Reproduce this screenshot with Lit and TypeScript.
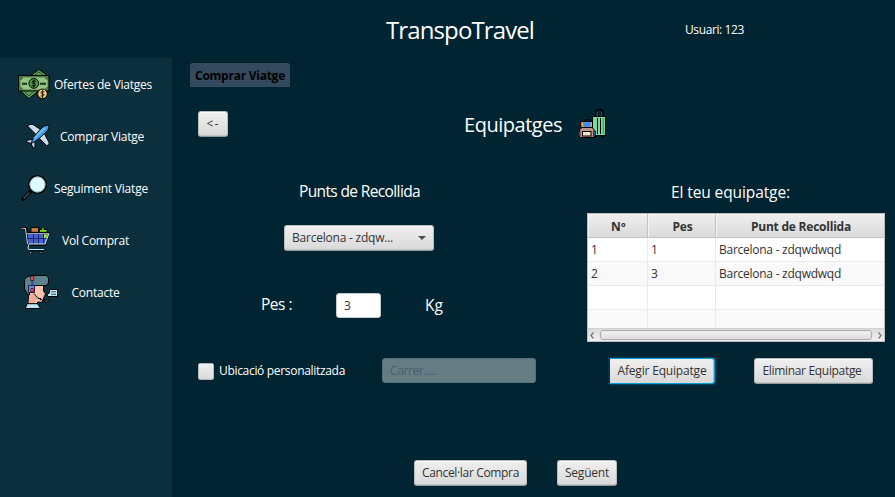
import { LitElement, html, css, svg } from "lit";
import { customElement, property } from "lit/decorators.js";

/** A single line of text whose letter spacing is tuned to fill a given width. */
@customElement("text-run")
class TextRun extends LitElement {
  @property() text = "";
  @property({ type: Number }) width = 0;

  static styles = css`
    :host { display: block; flex: none; white-space: nowrap; }
    .run { display: inline-block; white-space: pre; }
  `;

  firstUpdated() {
    const run = this.renderRoot.querySelector(".run") as HTMLElement;
    const natural = run.getBoundingClientRect().width;
    this.style.width = `${this.width}px`;
    run.style.letterSpacing = `${(this.width - natural) / this.text.length}px`;
  }

  render() {
    return html`<span class="run">${this.text}</span>`;
  }
}

const t = (text: string, width: number) => html`<text-run .text=${text} .width=${width}></text-run>`;

const money = svg`<svg width="34" height="32" viewBox="17 68 34 32" stroke="#000" stroke-width="1">
  <path d="M39 69.5 48 76H30zM20 90.500H39L29 98.500z" fill="#5f9f55"/>
  <path d="M35 75l4-3 4 3M25 92l4 4 4-4" fill="none" stroke="#294f2a"/>
  <rect x="18.500" y="75.500" width="30.500" height="15.500" fill="#4e7a48"/>
  <path d="M23 77.500H45C45 79 46 80 47.500 80V87C46 87 45 88 45 89.500H23C23 88 22 87 20.500 87V80C22 80 23 79 23 77.500z" fill="#94c582" stroke="none"/>
  <path d="M22 83.700h5M40 83.700h6" stroke="#17361c" stroke-width="2"/>
  <circle cx="33.800" cy="83.400" r="4.900" fill="#4e9a4c"/>
  <path d="M36 81.200h-3.200q-1.500 1 0 2.200h2q1.500 1.300 0 2.300h-3.300M33.900 79.500v8" fill="none"/>
  <circle cx="42.500" cy="93.800" r="4.800" fill="#f6cf7c"/>
  <path d="M44.500 91.700h-3q-1.400 1 0 2.100h2q1.400 1.200 0 2.200h-3M42.500 90v8" fill="none" stroke-width=".8"/>
</svg>`;

const plane = svg`<svg width="26" height="26" viewBox="25 123 26 26" stroke="#000" stroke-width="1" stroke-linejoin="round">
  <path d="M28 126.500 29.500 124.500H33L42 130.500 37 135.500zM43 131 49 142.500V145L46.500 145.500 38 137z" fill="#c9dce9"/>
  <path d="M31.500 139.500 27 140.300 26.500 142 31 143.500 33.200 148 35 147 35 142z" fill="#c3dbed"/>
  <path d="M31 143.500C32 139 38 131 44 126L48.800 125C49.500 129 47 131 44.500 133.500 40 138 36 141.500 31 143.500z" fill="#419de9"/>
  <path d="M34 138.500 44.500 128" stroke="#75bcf4" stroke-width="2"/>
</svg>`;

const lens = svg`<svg width="28" height="28" viewBox="21 174 28 28">
  <path d="M30.500 191.500 23 199.500" stroke="#000" stroke-width="3.400" stroke-linecap="round"/>
  <path d="M29.500 192.500 23.500 198.800" stroke="#3c5158" stroke-width="1.500"/>
  <circle cx="37.500" cy="184.500" r="8.700" fill="#dcfbff" stroke="#000" stroke-width="1.600"/>
  <circle cx="37.500" cy="184.500" r="7.600" fill="none" stroke="#8ba2aa" stroke-width=".8"/>
</svg>`;

const cart = svg`<svg width="30" height="30" viewBox="21 225 30 30" stroke="#000">
  <rect x="31" y="227.500" width="7.500" height="5" fill="#d07c43"/>
  <path d="M39.500 232.500V229.500H42V227H44V229.500H47V232.500z" fill="#88d51c" stroke-width=".8"/>
  <path d="M21.500 228.500H26L28.500 245" fill="none" stroke-width="3"/>
  <path d="M27 233H49.500L45.500 244.500H28z" fill="#4b61cd"/>
  <path d="M44 234.500h3.500l-1.200 4H44z" fill="#9adf29" stroke="none"/>
  <path d="M28 238.500h19M33.500 234v10M38.500 234v10M43.500 234v10" stroke="#14266e"/>
  <path d="M22 228.500h3.500L27.500 244M49 233.500l-4 10.500H29L28 248q0 1.500 2 1.500H44" fill="none" stroke="#bceaf4"/>
  <path d="M27 233.500H49" stroke="#9aa9ad"/>
  <path d="M27 232.300H51M29 245.500H46" fill="none" stroke-width=".9"/>
  <path d="M30 250.800H44" stroke-width=".8"/>
  <path d="M21.500 228.500H24" stroke="#ec5791" stroke-width="1.500"/>
  <circle cx="30.500" cy="252.700" r="1.200" fill="#9ab2bb"/><circle cx="41" cy="252.700" r="1.200" fill="#9ab2bb"/>
</svg>`;

const agent = svg`<svg width="36" height="36" viewBox="23 274 36 36" stroke="#000" stroke-linejoin="round">
  <path d="M28.500 292V304H37.500V302H42.500L43.500 298 45.500 294 43.500 291V284H30z" fill="#fac3b1" stroke-width=".9"/>
  <path d="M24.500 279.500 27 277 31 275.500H46.500L48.500 278V283L46 285.500H34.500L29.500 286V295H28L24.500 289z" fill="#5c828a"/>
  <path d="M30 294.500C28.500 297 29 300 28.500 303H34L37 299 35 293z" fill="#f5ab9a" stroke="none"/>
  <path d="M25.500 308 27 303.700H37.500L40.500 308.500H25.500z" fill="#bce6f8"/>
  <rect x="30.700" y="276" width="3" height="4.500" fill="#f44b58" stroke-width=".6"/>
  <path d="M32.300 281v4.500" stroke="#3548aa" stroke-width="2"/>
  <rect x="28.500" y="285.500" width="6" height="7" fill="#7783cb" stroke="#1c2857"/>
  <rect x="30.800" y="288.500" width="2.500" height="3.500" fill="#f44b58" stroke-width=".5"/>
  <path d="M34 293.500 38 298.500H41M42 300.500h3M38.500 297.500l1.500 2h2" fill="none" stroke-width=".9"/>
  <ellipse cx="46.500" cy="301" rx="2.200" ry="1.200" fill="#42565d" stroke-width=".8"/>
  <path d="M49.500 289.500H57.500V296.500H48L47 294.500 49.500 293z" fill="#c3eaf5"/>
  <path d="M51 291.800h5M51 294.300h5" stroke="#26536a"/>
</svg>`;

const bags = svg`<svg width="30" height="32" viewBox="577 108 30 32" stroke="#000">
  <path d="M596 116V111L597.500 109.500H601L602.500 111V116" fill="none" stroke-width="1.600"/>
  <path d="M597 116v-4M601.500 116v-4" stroke="#5b6b70" stroke-width=".7"/>
  <rect x="592.500" y="116.500" width="13" height="19" fill="#79dc9a"/>
  <path d="M597.500 118v16M600.500 118v16" /><path d="M603.300 118v16" stroke="#388b5b"/>
  <rect x="594" y="135.500" width="2" height="1.500" fill="#111"/><rect x="602" y="135.500" width="2" height="1.500" fill="#111"/>
  <path d="M585 122V119.500H589V122" fill="none"/>
  <path d="M580.500 127.500V122.500L582 121.500H592.500V128z" fill="#428cf0"/>
  <path d="M582.500 122v5M591.300 122v6" stroke="#f9aa35" stroke-width="1.200"/>
  <path d="M579.500 137.500V129.500L582 127.500H592L594 129.500V137.500z" fill="#be918b"/>
  <path d="M578.500 136V132.500L580 131V136zM594 131H595.500V136H594z" fill="#4a92f5" stroke-width=".7"/>
  <rect x="582.500" y="131.500" width="8.500" height="4.500" fill="#f8e2be"/>
</svg>`;

const menu = [
  { icon: money, label: "Ofertes de Viatges", w: 98, left: 17, gap: 3 },
  { icon: plane, label: "Comprar Viatge", w: 84, left: 25, gap: 9 },
  { icon: lens, label: "Seguiment Viatge", w: 94, left: 21, gap: 5 },
  { icon: cart, label: "Vol Comprat", w: 67, left: 21, gap: 11 },
  { icon: agent, label: "Contacte", w: 48, left: 23, gap: 12.5 },
];

const rows = [["1", "1", "Barcelona - zdqwdwqd"], ["2", "3", "Barcelona - zdqwdwqd"], ["", "", ""], ["", "", ""]];

@customElement("app-root")
class AppRoot extends LitElement {
  static styles = css`
    :host { display: block; width: 895px; height: 497px; overflow: hidden; background: #002432;
      font: 12px/16px "Open Sans", "Noto Sans", sans-serif; color: #fff; }
    * { box-sizing: border-box; }
    svg { display: block; flex: none; }
    header { height: 58px; display: flex; align-items: center; padding: 1px 0 0 386px; }
    .brand { font-size: 24px; line-height: 32px; }
    .user { margin: 1px 0 0 151px; }
    .body { display: flex; height: 439px; }
    aside { width: 172px; background: #0c2f3e; }
    .item { height: 52px; display: flex; align-items: center; }
    .item text-run { padding-top: 2px; }
    .icon { padding-left: var(--left); padding-right: var(--gap); }
    main { width: 723px; }
    .tab { margin: 5px 0 0 18px; width: 100px; height: 24px; padding: 5px 0 0 5px; background: #34495e;
      border-radius: 3px 3px 0 0; color: #000; font-weight: 700; }
    .heading { display: flex; margin-top: 21px; padding-left: 26px; height: 32px; }
    .btn { height: 26px; display: flex; align-items: center; justify-content: center; color: #333;
      border: 1px solid #b9bcbd; border-bottom-color: #929b9e; border-radius: 3px; flex: none;
      background: linear-gradient(#efefef, #d9d9d9); box-shadow: inset 0 1px #fafafa, inset 0 -1px #c5c5c5; }
    .back { width: 30px; margin-top: 3px; }
    .title { font-size: 20px; line-height: 28px; margin: 3px 0 0 236px; }
    .bags { margin-left: 15px; }
    .content { display: flex; height: 218px; }
    .form { width: 415px; padding-top: 40px; }
    .sub { font-size: 15.500px; line-height: 22px; }
    .form > .sub { margin-left: 127px; }
    .combo { width: 150px; margin: 23px 0 0 112px; padding: 0 7px; justify-content: space-between; }
    .arrow { width: 8px; height: 4px; background: #4c4c4c; clip-path: polygon(0 0, 100% 0, 50% 100%); }
    .weight { display: flex; align-items: center; margin-top: 42px; padding-left: 89px; height: 25px; }
    .weight .sub { margin-top: -4px; }
    .weight .input + .sub { margin-top: -1px; }
    .input { width: 45px; height: 25px; margin: 0 44px 0 44px; padding: 4px 7px; background: #fff; color: #333;
      border: 1px solid #c4c8c9; border-radius: 3px; }
    .list { padding-top: 41px; }
    .list > .sub { margin-left: 84px; }
    .table { width: 298px; height: 129px; margin-top: 10px; border: 1px solid #bdbdbd; background: #fff; color: #333; }
    .tr { display: grid; grid-template-columns: 60px 68px 1fr; height: 24px; }
    .tr:nth-child(odd) { background: #f9f9f9; }
    .tr:nth-child(5) { height: 18px; }
    .td { border-right: 1px solid #ebebeb; border-bottom: 1px solid #ebebeb; padding: 4px 0 0 3px; }
    .td:last-child { border-right: 0; }
    .tr:nth-child(5) .td { border-bottom: 0; }
    .tr.head { background: linear-gradient(#efefef, #d9d9d9); font-weight: 700; }
    .head .td { display: flex; justify-content: center; padding: 5px 0 0 2px; border-color: #c3c3c3; box-shadow: inset 1px 1px #f4f4f4; }
    .scroll { height: 13px; display: flex; align-items: center; justify-content: space-between; padding: 0 2px; background: linear-gradient(#dcdcdc, #f0f0f0); border-top: 1px solid #d0d0d0; }
    .thumb { width: 272px; height: 10px; border: 1px solid #a9a9a9; border-radius: 3px; background: linear-gradient(#f1f1f1, #dedede); }
    .chev { width: 4px; height: 7px; fill: none; stroke: #777; stroke-width: 1.3; }
    .actions { display: flex; align-items: center; height: 26px; padding-left: 26px; }
    .check { width: 16px; height: 17px; border: 1px solid #b4b7b8; border-radius: 2px; background: linear-gradient(#f0f0f0, #dadada); margin: 1px 5px 0 0; }
    .street { width: 154px; height: 25px; margin: 0 71px 1px 37px; padding: 4px 7px; background: #667c84; border: 1px solid #577079; border-radius: 3px; color: #465f69; }
    .add { width: 105px; margin-left: 3px; border: 1.500px solid #039ed3; border-left: 0; border-radius: 0 3px 3px 0;
      box-shadow: -2px 0 #00324a, 0 0 2px #0093c7, inset -1px 0 #8cc7dc; }
    .del { width: 119px; margin-left: 39px; padding-right: 3px; }
    .foot { display: flex; margin-top: 76px; padding-left: 242px; }
    .cancel { width: 113px; margin-right: 30px; }
    .next { width: 60px; }
  `;

  render() {
    return html`
      <header><div class="brand">${t("TranspoTravel", 148)}</div><div class="user">${t("Usuari: 123", 59)}</div></header>
      <div class="body">
        <aside>${menu.map((m) => html`<div class="item">
          <div class="icon" style="--left:${m.left}px;--gap:${m.gap}px">${m.icon}</div>${t(m.label, m.w)}</div>`)}</aside>
        <main>
          <div class="tab">${t("Comprar Viatge", 90)}</div>
          <div class="heading">
            <div class="btn back">${t("<-", 13)}</div>
            <div class="title">${t("Equipatges", 98)}</div>
            <div class="bags">${bags}</div>
          </div>
          <div class="content">
            <div class="form">
              <div class="sub">${t("Punts de Recollida", 121)}</div>
              <div class="btn combo">${t("Barcelona - zdqw...", 101)}<span class="arrow"></span></div>
              <div class="weight">
                <div class="sub">${t("Pes :", 31)}</div>
                <div class="input">3</div>
                <div class="sub">${t("Kg", 18)}</div>
              </div>
            </div>
            <div class="list">
              <div class="sub">${t("El teu equipatge:", 119)}</div>
              <div class="table">
                <div class="tr head"><div class="td">${t("Nº", 15)}</div><div class="td">${t("Pes", 20)}</div><div class="td">${t("Punt de Recollida", 100)}</div></div>
                ${rows.map((r) => html`<div class="tr">${r.map((c, i) => html`<div class="td">${i === 2 && c ? t(c, 122) : c}</div>`)}</div>`)}
                <div class="scroll">
                  <svg class="chev" viewBox="0 0 4 7"><path d="M3.500.5.8 3.500 3.500 6.500"/></svg>
                  <span class="thumb"></span>
                  <svg class="chev" viewBox="0 0 4 7"><path d="M.5.5 3.200 3.500.5 6.500"/></svg>
                </div>
              </div>
            </div>
          </div>
          <div class="actions">
            <span class="check"></span>${t("Ubicació personalitzada", 126)}
            <div class="street">${t("Carrer.....", 47)}</div>
            <div class="btn add">${t("Afegir Equipatge", 89)}</div>
            <div class="btn del">${t("Eliminar Equipatge", 99)}</div>
          </div>
          <div class="foot">
            <div class="btn cancel">${t("Cancel·lar Compra", 97)}</div>
            <div class="btn next">${t("Següent", 44)}</div>
          </div>
        </main>
      </div>`;
  }
}
